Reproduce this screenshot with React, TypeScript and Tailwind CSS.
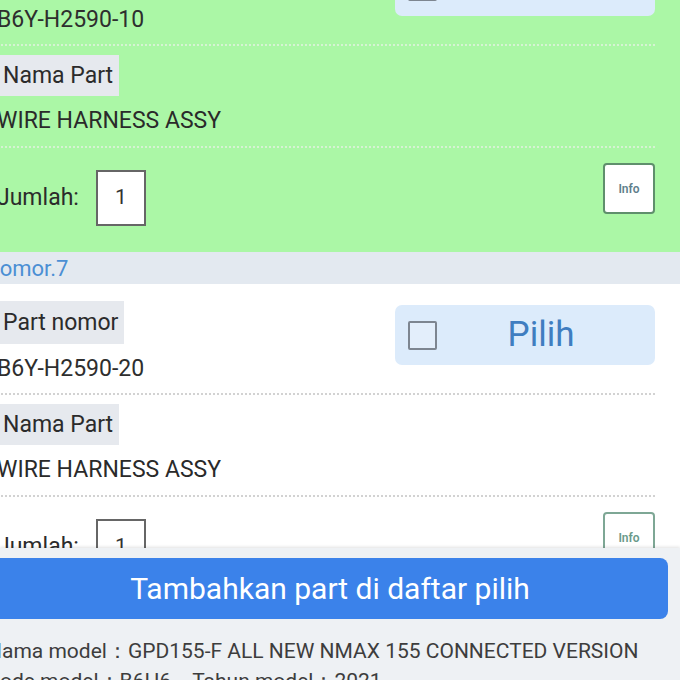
import React from "react"

type CardProps = {
  partNo: string
  name: string
  green?: boolean
}

function PartCard({ partNo, name, green }: CardProps) {
  const dots = green
    ? "border-t-2 border-dotted border-[#d6f3d3]"
    : "border-t-2 border-dotted border-[#d2d2d2]"

  return (
    <div className={green ? "bg-[#abf7a6] pt-[17px] pb-[26px]" : "bg-white pt-[17px] pb-[26px]"}>
      <div className="mr-[25px]">
        <div className="flex items-start justify-between">
          <div className="flex flex-col items-start">
            <span className="h-[43px] bg-[#e6e9ee] px-[6px] text-[23px] leading-[43px] text-[#2b2b2b]">
              Part nomor
            </span>
            <span className="mt-[13px] text-[23px] leading-[24px] text-[#2e2e2e]">{partNo}</span>
          </div>
          <button className="mt-[4px] flex h-[60px] w-[260px] items-center rounded-[7px] bg-[#dcebfb] pl-[13px]">
            <span className="h-[29px] w-[29px] rounded-[2px] border-2 border-[#7d8590] bg-[#e3eefb]" />
            <span className="flex-1 pr-[10px] text-center text-[35px] text-[#3f7dc0]">Pilih</span>
          </button>
        </div>
        <div className={"mt-[12px] " + dots} />
        <div className="mt-[9px] flex flex-col items-start">
          <span className="h-[41px] bg-[#e6e9ee] px-[6px] text-[23px] leading-[41px] text-[#2b2b2b]">
            Nama Part
          </span>
          <span className="mt-[13px] text-[23px] leading-[24px] text-[#2a2a2a]">{name}</span>
        </div>
        <div className={"mt-[13px] " + dots} />
        <div className="mt-[15px] flex items-start justify-between">
          <div className="mt-[7px] flex items-center">
            <span className="text-[23px] text-[#2b2b2b]">Jumlah:</span>
            <span className="ml-[17px] flex h-[56px] w-[50px] items-center justify-center border-2 border-[#666] bg-white text-[21px] text-[#333]">
              1
            </span>
          </div>
          <button
            className={
              green
                ? "flex h-[51px] w-[52px] items-center justify-center rounded-[4px] border-2 border-[#5f8f6c] bg-white text-[12px] font-semibold text-[#5f7f8c]"
                : "flex h-[51px] w-[52px] items-center justify-center rounded-[4px] border-2 border-[#7ea795] bg-white text-[12px] font-semibold text-[#6a9a8a]"
            }
          >
            Info
          </button>
        </div>
      </div>
    </div>
  )
}

export default function App() {
  return (
    <div className="flex h-[680px] w-[680px] flex-col overflow-hidden bg-white font-['Roboto',sans-serif]">
      <div className="flex-1 overflow-hidden">
        <div className="-ml-[3px] -mt-[65px]">
          <PartCard green partNo="B6Y-H2590-10" name="WIRE HARNESS ASSY" />
          <div className="flex h-[32px] items-center bg-[#e3e9f0]">
            <span className="-ml-[13px] text-[22px] text-[#4b8fd4]">Nomor.7</span>
          </div>
          <PartCard partNo="B6Y-H2590-20" name="WIRE HARNESS ASSY" />
        </div>
      </div>
      <div className="h-[132px] shrink-0 bg-[#eef1f4] shadow-[0_-1px_3px_rgba(0,0,0,0.12)]">
        <div className="-ml-[8px] mr-[12px] mt-[10px]">
          <button className="h-[61px] w-full rounded-[8px] bg-[#3b82ea] text-[30px] text-white">
            Tambahkan part di daftar pilih
          </button>
        </div>
        <div className="-ml-[13px] mt-[17px] text-[21px] leading-[30px] text-[#3d3d3d]">
          <p>Nama model：GPD155-F ALL NEW NMAX 155 CONNECTED VERSION</p>
          <p>Kode model：B6H6，Tahun model：2021</p>
        </div>
      </div>
    </div>
  )
}
